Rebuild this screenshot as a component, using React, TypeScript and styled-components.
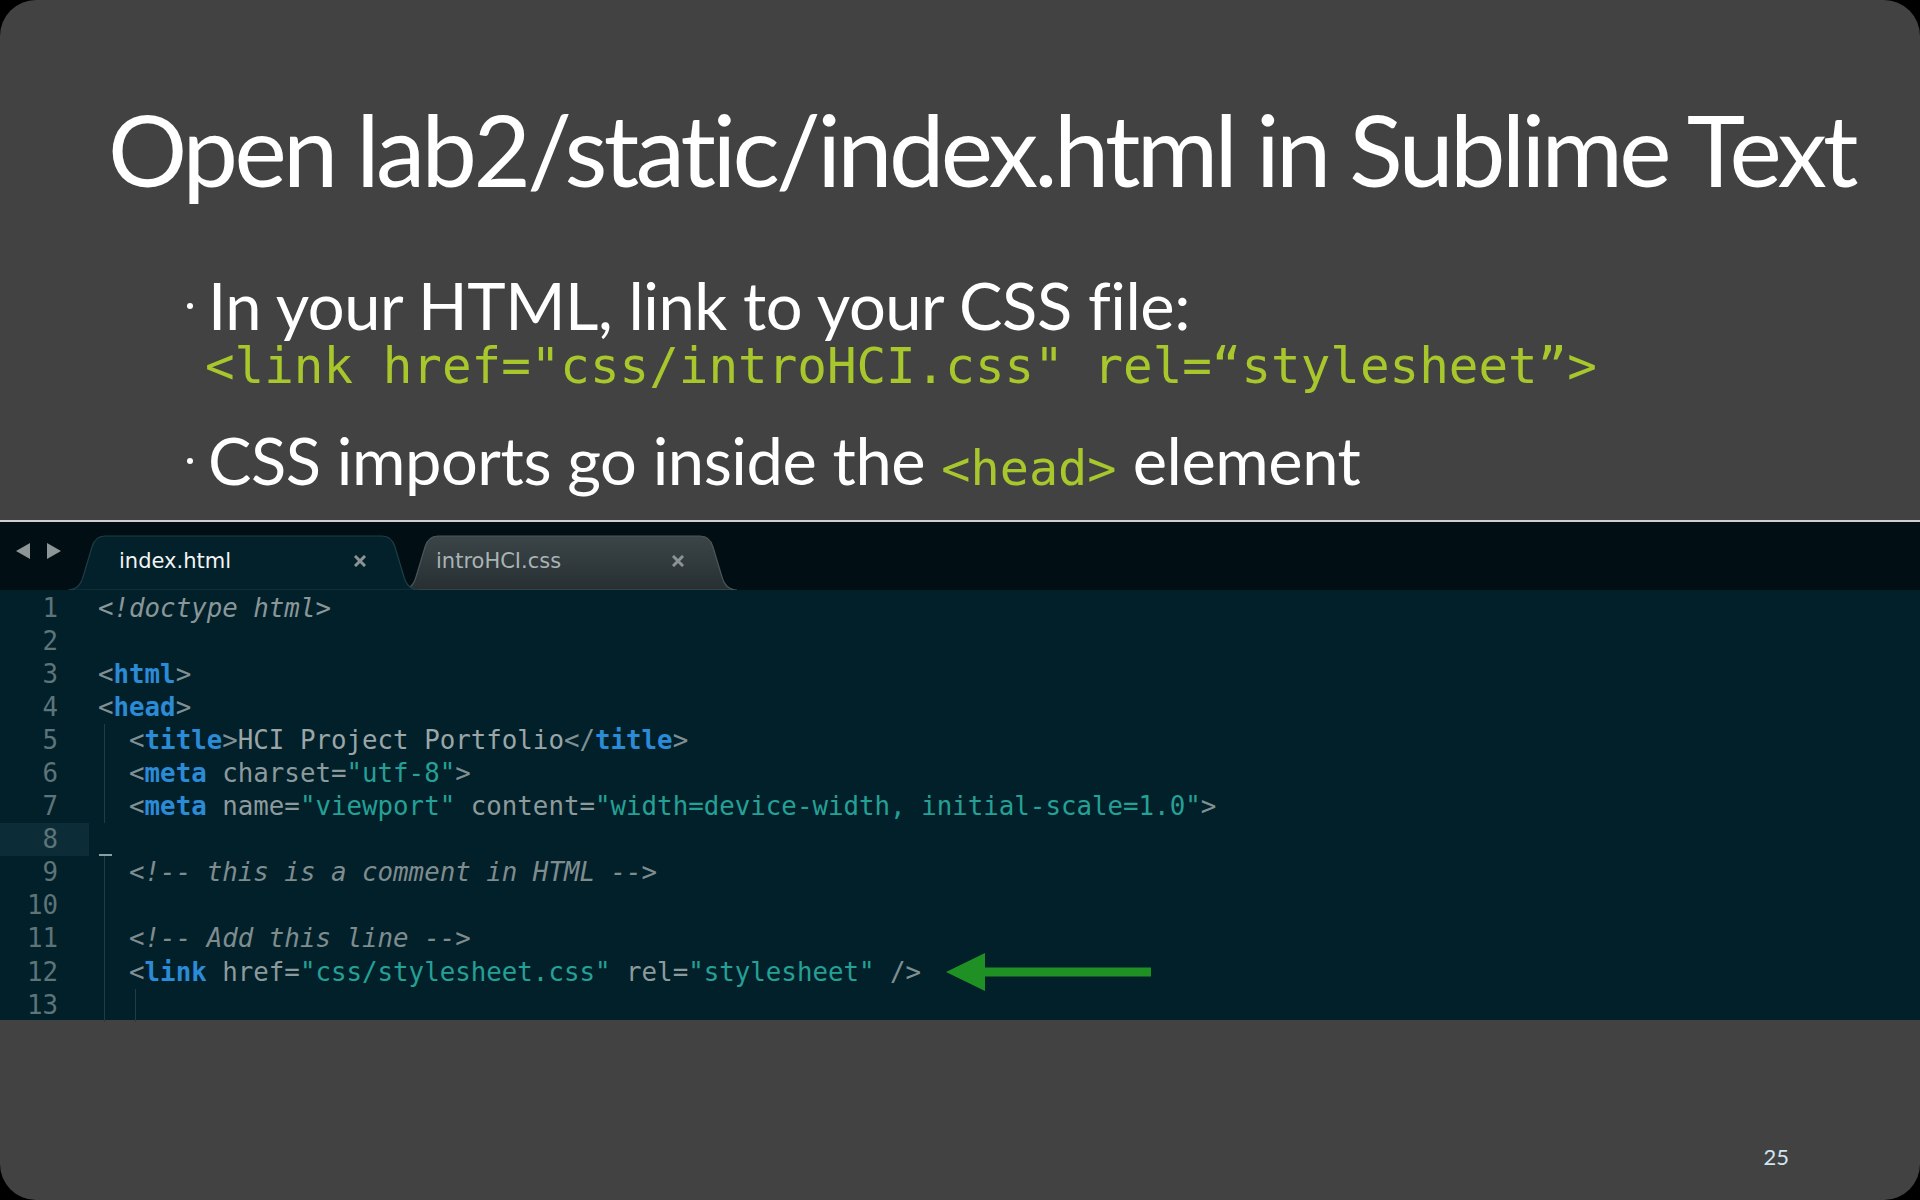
import React from "react";
import styled, { createGlobalStyle } from "styled-components";

const GlobalStyle = createGlobalStyle`
  html, body { margin: 0; padding: 0; background: #000; }
  #root { width: 1920px; height: 1200px; }
`;

const Slide = styled.div`
  width: 1920px;
  height: 1200px;
  box-sizing: border-box;
  background: #424242;
  border-radius: 36px;
  overflow: hidden;
  display: flex;
  flex-direction: column;
  font-family: Lato, "Open Sans", sans-serif;
  color: #ffffff;
`;

const Header = styled.header`
  height: 520px;
  box-sizing: border-box;
  padding: 99px 0 0 108px;
`;

const Title = styled.h1`
  margin: 0;
  font-weight: 400;
  font-size: 99px;
  line-height: 99px;
  letter-spacing: -3.65px;
  white-space: nowrap;
`;

const Bullets = styled.ul`
  list-style: none;
  margin: 75px 0 0 79px;
  padding: 0;
  display: flex;
  flex-direction: column;
  gap: 36px;
`;

const Bullet = styled.li`
  display: flex;
  align-items: flex-start;
  gap: 15px;
  font-size: 65px;
  line-height: 65px;
  letter-spacing: -0.45px;
  white-space: nowrap;
`;

const Dot = styled.span`
  flex: none;
  width: 6px;
  height: 6px;
  border-radius: 50%;
  background: #ffffff;
  margin-top: 30px;
`;

const BulletBody = styled.div`
  display: flex;
  flex-direction: column;
`;

const SlideCode = styled.code`
  display: block;
  margin: 2px 0 0 -3px;
  font-family: "DejaVu Sans Mono", monospace;
  font-size: 49.2px;
  line-height: 52px;
  letter-spacing: 0;
  color: #a8c72c;
`;

const InlineCode = styled.code`
  font-family: "DejaVu Sans Mono", monospace;
  font-size: 48.5px;
  line-height: 48px;
  letter-spacing: 0;
  color: #a8c72c;
`;

const Editor = styled.section`
  height: 500px;
  box-sizing: border-box;
  border-top: 2px solid #cfcfcf;
  background: #02202a;
  display: flex;
  flex-direction: column;
`;

const TabBar = styled.div`
  height: 68px;
  flex: none;
  background: #010e14;
  display: flex;
  align-items: flex-end;
  padding-left: 16px;
`;

const NavArrows = styled.div`
  align-self: center;
  display: flex;
  gap: 17px;
  margin-right: 7px;
  margin-top: -10px;
`;

const Tabs = styled.div`
  display: flex;
  align-items: flex-end;
`;

const Tab = styled.div<{ $active?: boolean; $width: number }>`
  position: relative;
  z-index: ${(p) => (p.$active ? 2 : 1)};
  width: ${(p) => p.$width}px;
  height: 55px;
  box-sizing: border-box;
  display: flex;
  align-items: center;
  padding: 0 53px 4px ${(p) => (p.$active ? 51 : 35)}px;
  & + & {
    margin-left: -18px;
  }
`;

const TabShape = styled.svg`
  position: absolute;
  inset: 0;
  width: 100%;
  height: 100%;
  z-index: 0;
`;

const TabLabel = styled.span<{ $active?: boolean }>`
  position: relative;
  flex: 1;
  font-family: "DejaVu Sans", sans-serif;
  font-size: 21px;
  color: ${(p) => (p.$active ? "#f2f4f4" : "#aab3b5")};
`;

const CloseIcon = styled.svg`
  position: relative;
  flex: none;
`;

const CodeArea = styled.div`
  flex: 1;
  padding-top: 1.5px;
  font-family: "DejaVu Sans Mono", monospace;
  font-size: 25.8px;
  line-height: 33.1px;
`;

const Line = styled.div`
  display: flex;
  height: 33.1px;
`;

const LineNo = styled.span<{ $current?: boolean }>`
  flex: none;
  width: 89px;
  box-sizing: border-box;
  padding-right: 31px;
  text-align: right;
  color: #5d7479;
  background: ${(p) => (p.$current ? "#0c2d37" : "transparent")};
`;

const LineCode = styled.span`
  display: flex;
  align-items: center;
  padding-left: 9px;
  white-space: pre;
`;

const Guide = styled.span`
  align-self: stretch;
  width: 2ch;
  flex: none;
  background: linear-gradient(
    to right,
    transparent 6px,
    #1e3d46 6px,
    #1e3d46 7px,
    transparent 7px
  );
`;

const Cursor = styled.span`
  align-self: flex-end;
  width: 13px;
  height: 2px;
  margin-left: 1px;
  background: #8d9ea0;
`;

type Kind = "p" | "tag" | "attr" | "str" | "text" | "comment" | "doc";

const colors: Record<Kind, string> = {
  p: "#7f8f92",
  tag: "#2b8bd6",
  attr: "#8d9a9c",
  str: "#25a096",
  text: "#9aa6a7",
  comment: "#7f8c8e",
  doc: "#8a9698",
};

const Token = styled.span<{ $kind: Kind }>`
  color: ${(p) => colors[p.$kind]};
  font-weight: ${(p) => (p.$kind === "tag" ? 700 : 400)};
  font-style: ${(p) => (p.$kind === "comment" || p.$kind === "doc" ? "italic" : "normal")};
`;

const Arrow = styled.svg`
  flex: none;
  margin-left: 25px;
`;

const Footer = styled.footer`
  flex: 1;
  display: flex;
  justify-content: flex-end;
  align-items: flex-end;
  padding: 0 131px 32px 0;
`;

const PageNum = styled.span`
  font-size: 22px;
  line-height: 22px;
  color: #cfe4f3;
`;

type Tok = [Kind, string];
type LineDef = { indent: number; toks: Tok[]; arrow?: boolean; cursor?: boolean };

const lines: LineDef[] = [
  { indent: 0, toks: [["doc", "<!doctype html>"]] },
  { indent: 0, toks: [] },
  { indent: 0, toks: [["p", "<"], ["tag", "html"], ["p", ">"]] },
  { indent: 0, toks: [["p", "<"], ["tag", "head"], ["p", ">"]] },
  {
    indent: 1,
    toks: [
      ["p", "<"],
      ["tag", "title"],
      ["p", ">"],
      ["text", "HCI Project Portfolio"],
      ["p", "</"],
      ["tag", "title"],
      ["p", ">"],
    ],
  },
  {
    indent: 1,
    toks: [
      ["p", "<"],
      ["tag", "meta"],
      ["attr", " charset="],
      ["str", '"utf-8"'],
      ["p", ">"],
    ],
  },
  {
    indent: 1,
    toks: [
      ["p", "<"],
      ["tag", "meta"],
      ["attr", " name="],
      ["str", '"viewport"'],
      ["attr", " content="],
      ["str", '"width=device-width, initial-scale=1.0"'],
      ["p", ">"],
    ],
  },
  { indent: 0, toks: [], cursor: true },
  { indent: 1, toks: [["comment", "<!-- this is a comment in HTML -->"]] },
  { indent: 1, toks: [] },
  { indent: 1, toks: [["comment", "<!-- Add this line -->"]] },
  {
    indent: 1,
    arrow: true,
    toks: [
      ["p", "<"],
      ["tag", "link"],
      ["attr", " href="],
      ["str", '"css/stylesheet.css"'],
      ["attr", " rel="],
      ["str", '"stylesheet"'],
      ["p", " />"],
    ],
  },
  { indent: 2, toks: [] },
];

const TabPath = ({ active, width }: { active?: boolean; width: number }) => {
  const w = width;
  return (
    <TabShape viewBox={`0 0 ${w} 55`} preserveAspectRatio="none">
      <defs>
        <linearGradient id="inactiveTab" x1="0" y1="0" x2="0" y2="1">
          <stop offset="0" stopColor="#3b4548" />
          <stop offset="1" stopColor="#272f32" />
        </linearGradient>
      </defs>
      <path
        d={`M0,55 C9,55 13,49 15,42 L24,12 C26,5 30,1 37,1 L${w - 37},1 C${w - 30},1 ${w - 26},5 ${w - 24},12 L${w - 15},42 C${w - 13},49 ${w - 9},55 ${w},55 Z`}
        fill={active ? "#03212b" : "url(#inactiveTab)"}
        stroke={active ? "#1f3d47" : "#4b5659"}
        strokeWidth="1.2"
      />
    </TabShape>
  );
};

const Close = () => (
  <CloseIcon width="12" height="12" viewBox="0 0 12 12">
    <path d="M2,2 L10,10 M10,2 L2,10" stroke="#8c9395" strokeWidth="3" strokeLinecap="square" />
  </CloseIcon>
);

export default function App() {
  return (
    <>
      <GlobalStyle />
      <Slide>
        <Header>
          <Title>Open lab2/static/index.html in Sublime Text</Title>
          <Bullets>
            <Bullet>
              <Dot />
              <BulletBody>
                <span>In your HTML, link to your CSS file:</span>
                <SlideCode>&lt;link href="css/introHCI.css" rel=“stylesheet”&gt;</SlideCode>
              </BulletBody>
            </Bullet>
            <Bullet>
              <Dot />
              <BulletBody>
                <span>
                  CSS imports go inside the <InlineCode>&lt;head&gt;</InlineCode> element
                </span>
              </BulletBody>
            </Bullet>
          </Bullets>
        </Header>
        <Editor>
          <TabBar>
            <NavArrows>
              <svg width="14" height="16" viewBox="0 0 14 16">
                <path d="M14,0 L14,16 L0,8 Z" fill="#8e9597" />
              </svg>
              <svg width="14" height="16" viewBox="0 0 14 16">
                <path d="M0,0 L0,16 L14,8 Z" fill="#8e9597" />
              </svg>
            </NavArrows>
            <Tabs>
              <Tab $active $width={351}>
                <TabPath active width={351} />
                <TabLabel $active>index.html</TabLabel>
                <Close />
              </Tab>
              <Tab $width={336}>
                <TabPath width={336} />
                <TabLabel>introHCI.css</TabLabel>
                <Close />
              </Tab>
            </Tabs>
          </TabBar>
          <CodeArea>
            {lines.map((l, i) => (
              <Line key={i}>
                <LineNo $current={l.cursor}>{i + 1}</LineNo>
                <LineCode>
                  {Array.from({ length: l.indent }).map((_, g) => (
                    <Guide key={g} />
                  ))}
                  {l.cursor && <Cursor />}
                  {l.toks.map(([k, t], j) => (
                    <Token key={j} $kind={k}>
                      {t}
                    </Token>
                  ))}
                  {l.arrow && (
                    <Arrow width="205" height="38" viewBox="0 0 205 38">
                      <path d="M0,19 L39,0 L39,14.5 L205,14.5 L205,23.5 L39,23.5 L39,38 Z" fill="#1f9124" />
                    </Arrow>
                  )}
                </LineCode>
              </Line>
            ))}
          </CodeArea>
        </Editor>
        <Footer>
          <PageNum>25</PageNum>
        </Footer>
      </Slide>
    </>
  );
}
